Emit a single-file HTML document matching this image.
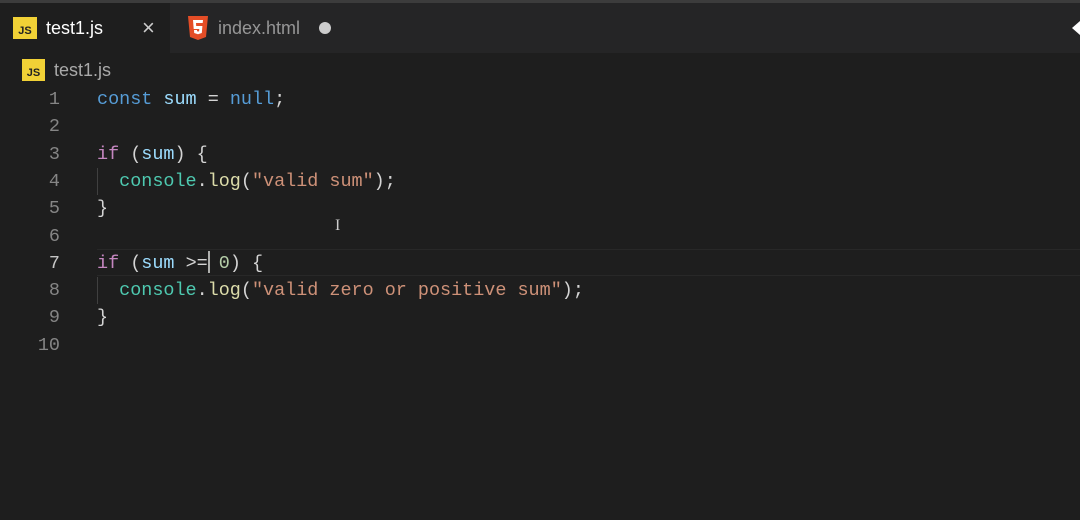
<!DOCTYPE html>
<html><head><style>
body{margin:0;width:1080px;height:520px;background:#1e1e1e;overflow:hidden;font-family:"Liberation Sans",sans-serif;position:relative}
.top{position:absolute;left:0;top:0;width:1080px;height:3px;background:#3c3c3c}
.tabs{position:absolute;left:0;top:3px;width:1080px;height:50px;background:#252526}
.tab{position:absolute;top:0;height:50px;display:flex;align-items:center;font-size:18px}
.js{width:24px;height:22px;background:#f1d136;color:#222;font-size:11px;font-weight:bold;display:flex;align-items:flex-end;justify-content:center;box-sizing:border-box;padding-bottom:2px}
.code{position:absolute;left:0;top:86px;font-family:"Liberation Mono",monospace;font-size:18.45px}
.ln{position:absolute;height:27.3px;line-height:27.3px;white-space:pre}
.num{position:absolute;right:1020px;width:40px;text-align:right;color:#858585}
.k{color:#c586c0}.b{color:#569cd6}.v{color:#9cdcfe}.f{color:#dcdcaa}.c{color:#4ec9b0}.s{color:#ce9178}.n{color:#b5cea8}.p{color:#d4d4d4}
</style></head><body>
<div class="top"></div>
<div class="tabs">
 <div class="tab" style="left:0;width:170px;background:#1e1e1e">
  <div class="js" style="margin-left:13px">JS</div>
  <span style="color:#fff;margin-left:9px">test1.js</span>
  <span style="color:#ccc;position:absolute;left:142px;font-size:22px">×</span>
 </div>
 <div class="tab" style="left:170px;width:180px">
  <svg width="22" height="24" viewBox="0 0 22 24" style="margin-left:17px"><path d="M1 0h20l-2 21-8 3-8-3z" fill="#e44d26"/><path d="M6 4h10l-.3 3H9l.2 3h6.2l-.6 7-3.8 1.2-3.8-1.2-.2-3h3l.1 1.2 1 .3 1-.3.2-2.2H6.7z" fill="#fff"/></svg>
  <span style="color:#969696;margin-left:9px">index.html</span>
  <span style="position:absolute;left:149px;width:12px;height:12px;border-radius:50%;background:#ccc"></span>
 </div>
 <div style="position:absolute;left:1072px;top:18px;width:0;height:0;border-top:7px solid transparent;border-bottom:7px solid transparent;border-right:8px solid #fff"></div>
</div>
<div style="position:absolute;left:22px;top:59px;display:flex;align-items:center">
 <div class="js" style="width:23px;height:22px">JS</div>
 <span style="color:#a9a9a9;font-size:18px;margin-left:9px">test1.js</span>
</div>
<div style="position:absolute;left:97px;top:249px;width:983px;height:25px;border-top:1px solid #282828;border-bottom:1px solid #282828"></div>
<div style="position:absolute;left:97px;top:168px;width:1px;height:27px;background:#404040"></div>
<div style="position:absolute;left:97px;top:277px;width:1px;height:27px;background:#404040"></div>
<div class="code">
<div class="ln" style="top:0;left:97px"><span class="b">const</span> <span class="v">sum</span> <span class="p">=</span> <span class="b">null</span><span class="p">;</span></div>
<div class="ln" style="top:54.6px;left:97px"><span class="k">if</span> <span class="p">(</span><span class="v">sum</span><span class="p">) {</span></div>
<div class="ln" style="top:81.9px;left:97px"><span class="p">  </span><span class="c">console</span><span class="p">.</span><span class="f">log</span><span class="p">(</span><span class="s">"valid sum"</span><span class="p">);</span></div>
<div class="ln" style="top:109.2px;left:97px"><span class="p">}</span></div>
<div class="ln" style="top:163.8px;left:97px"><span class="k">if</span> <span class="p">(</span><span class="v">sum</span> <span class="p">&gt;=</span> <span class="n">0</span><span class="p">) {</span></div>
<div class="ln" style="top:191.1px;left:97px"><span class="p">  </span><span class="c">console</span><span class="p">.</span><span class="f">log</span><span class="p">(</span><span class="s">"valid zero or positive sum"</span><span class="p">);</span></div>
<div class="ln" style="top:218.4px;left:97px"><span class="p">}</span></div>
<div class="ln num" style="top:0;left:20px">1</div>
<div class="ln num" style="top:27.3px;left:20px">2</div>
<div class="ln num" style="top:54.6px;left:20px">3</div>
<div class="ln num" style="top:81.9px;left:20px">4</div>
<div class="ln num" style="top:109.2px;left:20px">5</div>
<div class="ln num" style="top:136.5px;left:20px">6</div>
<div class="ln num" style="top:163.8px;left:20px;color:#c6c6c6">7</div>
<div class="ln num" style="top:191.1px;left:20px">8</div>
<div class="ln num" style="top:218.4px;left:20px">9</div>
<div class="ln num" style="top:245.7px;left:20px">10</div>
</div>
<div style="position:absolute;left:208px;top:251px;width:2px;height:22px;background:#aeafad"></div>
<div style="position:absolute;left:335px;top:217px;color:#ccc;font-size:16px;font-family:'Liberation Serif',serif">I</div>
</body></html>
